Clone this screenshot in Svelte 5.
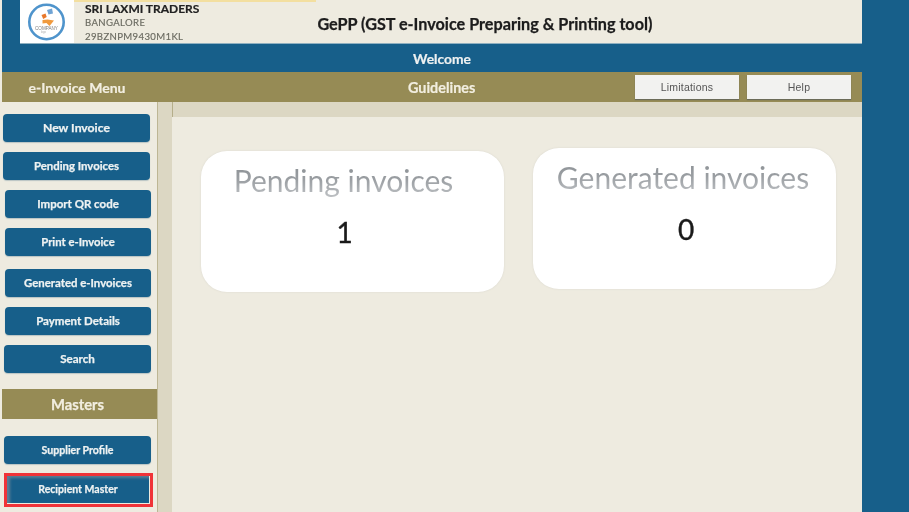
<script>
  const menu = [
    { label: 'New Invoice', cls: 'a s122' },
    { label: 'Pending Invoices', cls: 'a s114' },
    { label: 'Import QR code', cls: 'b s115' },
    { label: 'Print e-Invoice', cls: 'b s113' },
    { label: 'Generated e-Invoices', cls: 'b s114 gap13' },
    { label: 'Payment Details', cls: 'b s115 gap11' },
    { label: 'Search', cls: 'c s116' }
  ];
</script>

<div class="page">
  <div class="frame">
    <header class="top">
      <div class="logo">
        <svg width="40" height="40" viewBox="0 0 40 40" aria-hidden="true">
          <circle cx="19.5" cy="20" r="17.2" fill="#fff" stroke="#4f94cc" stroke-width="2.6" />
          <path d="M14.5 13l4-1.500 1.200 3.500-3.500 2z" fill="#e8772a" />
          <path d="M20 8l5-1.500 1 5-4.500 1z" fill="#6fa3d4" />
          <path d="M15.500 18l5-.500 6.500 1-4.500 5.500-3-3-4 .500z" fill="#f09a3e" />
          <text x="19.5" y="27.500" class="logotext">COMPANY</text>
          <text x="14" y="31" class="logosub">logo</text>
        </svg>
      </div>
      <div class="firm">
        <div class="firm-name">SRI LAXMI TRADERS</div>
        <div class="firm-sub">BANGALORE</div>
        <div class="firm-sub">29BZNPM9430M1KL</div>
      </div>
      <h1>GePP (GST e-Invoice Preparing &amp; Printing tool)</h1>
      <span class="accent"></span>
    </header>
    <div class="welcome">Welcome</div>
    <div class="olive">
      <div class="menu-title">e-Invoice Menu</div>
      <div class="guidelines">Guidelines</div>
      <div class="olive-buttons">
        <button class="light">Limitations</button>
        <button class="light">Help</button>
      </div>
    </div>
    <div class="body">
      <aside class="side">
        {#each menu as item}
          <button class="nav {item.cls}">{item.label}</button>
        {/each}
        <div class="masters">Masters</div>
        <button class="nav c supplier">Supplier Profile</button>
        <div class="highlight"><button class="nav inner">Recipient Master</button></div>
      </aside>
      <div class="strip"></div>
      <main class="main">
        <div class="subhead"></div>
        <div class="cards">
          <section class="card first">
            <div class="card-title">Pending invoices</div>
            <div class="card-num">1</div>
          </section>
          <section class="card second">
            <div class="card-title">Generated invoices</div>
            <div class="card-num">0</div>
          </section>
        </div>
      </main>
    </div>
  </div>
</div>

<style>
  :global(body) { margin: 0; background: #175f8a; }
  .page {
    width: 909px; height: 512px; overflow: hidden; background: #175f8a;
    font-family: Lato, "Open Sans", sans-serif; filter: blur(0.35px);
    border-left: 2px solid #eeebe0; box-sizing: border-box;
  }
  .frame { width: 860px; }
  .top {
    margin-left: 18px; height: 44px; background: #eeebe0; display: flex; align-items: center;
    border-bottom: 1px solid #8fb0c0; box-sizing: border-box; position: relative;
  }
  .accent { position: absolute; left: 54px; top: 0; width: 242px; height: 1.5px; background: #f3dfa0; }
  .logo { width: 54px; height: 43px; background: #fff; display: flex; align-items: center; justify-content: center; }
  .logotext { font-size: 4.6px; fill: #808080; text-anchor: middle; font-family: "Liberation Sans", sans-serif; }
  .logosub { font-size: 2.6px; fill: #aaa; font-family: "Liberation Sans", sans-serif; }
  .firm { margin-left: 11px; padding-top: 2px; }
  .firm-name { font-size: 12px; font-weight: 700; color: #222; line-height: 15px; -webkit-text-stroke: .2px #222; }
  .firm-sub { font-size: 9.6px; line-height: 14px; color: #6a6a60; letter-spacing: 0.35px; -webkit-text-stroke: .15px #6a6a60; }
  h1 {
    margin: 3px 0 0 118px; font-size: 16.2px; font-weight: 700; color: #1c1c1c; white-space: nowrap;
    -webkit-text-stroke: .25px #1c1c1c;
  }
  .welcome {
    height: 28px; line-height: 29px; text-align: center; color: #eef1f1; font-weight: 700; font-size: 13.8px;
    padding-left: 20px; -webkit-text-stroke: .2px #eef1f1;
  }
  .olive {
    height: 30px; background: #968b55; display: flex; align-items: center; color: #f2eee0; font-weight: 700;
    -webkit-text-stroke: .2px #f2eee0;
  }
  .menu-title { width: 150px; text-align: center; font-size: 14px; }
  .guidelines { margin-left: 256px; font-size: 14.4px; }
  .olive-buttons { display: flex; gap: 8px; margin-left: auto; margin-right: 11px; -webkit-text-stroke: 0; }
  .light {
    width: 104px; height: 24px; padding: 0; border: 0; background: #f2f2f0; color: #555;
    font: 400 10.5px "Liberation Sans", sans-serif; box-shadow: 0 1px 1px #6b6b58; letter-spacing: .2px;
  }
  .body { display: flex; height: 410px; background: #eeebe0; }
  .side { width: 155px; display: flex; flex-direction: column; align-items: flex-start; padding-top: 12px; box-sizing: border-box; }
  .nav {
    width: 147px; height: 28px; margin: 0 0 10px 1px; padding: 0 0 1px; border: 0; border-radius: 4px;
    background: #175f8a; color: #eef2f2; font: 700 11.5px Lato, sans-serif;
    box-shadow: 0 1px 1px #b8c4c4; -webkit-text-stroke: .25px #eef2f2;
  }
  .s122 { font-size: 12.2px; }
  .s116 { font-size: 11.6px; }
  .s115 { font-size: 11.5px; }
  .s114 { font-size: 11.4px; }
  .s113 { font-size: 11.3px; }
  .b { margin-left: 3px; width: 146px; }
  .c { margin-left: 2px; }
  .gap13 { margin-top: 3px; }
  .gap11 { margin-top: 0; }
  .masters {
    width: 155px; height: 30px; line-height: 31px; margin-top: 6px; margin-bottom: 17px; padding-right: 4px; box-sizing: border-box;
    background: #968b55; color: #f2eee0;
    text-align: center; font-weight: 700; font-size: 14.8px; -webkit-text-stroke: .25px #f2eee0;
  }
  .supplier { font-size: 10.6px; margin-bottom: 9px; }
  .highlight {
    margin-left: 2px; width: 149px; height: 34px; box-sizing: border-box; border: 3.5px solid #f03338;
  }
  .inner {
    width: 142px; height: 27px; margin: 0; border-radius: 0; box-shadow: inset 3px 2px 3px #5d7f96;
    display: block; font-size: 10.5px;
  }
  .strip { width: 15px; background: #dcd7c3; border-left: 1px solid #bdb694; box-sizing: border-box; }
  .main { flex: 1; min-width: 0; }
  .subhead { height: 15px; background: #dcd7c3; border-left: 1px solid #b5ae8a; }
  .cards { display: flex; gap: 29px; align-items: flex-start; padding: 34px 0 0 29px; }
  .card {
    width: 303px; height: 141px; background: #fff; border-radius: 26px; box-shadow: 0 0 2px #d8d6cc;
    text-align: center; box-sizing: border-box;
  }
  .second { margin-top: -3px; }
  .card-title {
    font-size: 30px; line-height: 36px; padding-top: 11px; font-weight: 400;
    background: linear-gradient(#7f8589, #9a9ea2 60%, #bfc2c5); -webkit-background-clip: text; background-clip: text;
    color: transparent;
  }
  .first .card-title { padding-right: 18px; }
  .second .card-title { padding-right: 3px; }
  .card-num { font-size: 28px; line-height: 32px; color: #1a1a1a; margin-top: 18px; padding-right: 16px; -webkit-text-stroke: .4px #1a1a1a; }
  .second .card-num { padding-right: 0; padding-left: 3px; }
</style>
